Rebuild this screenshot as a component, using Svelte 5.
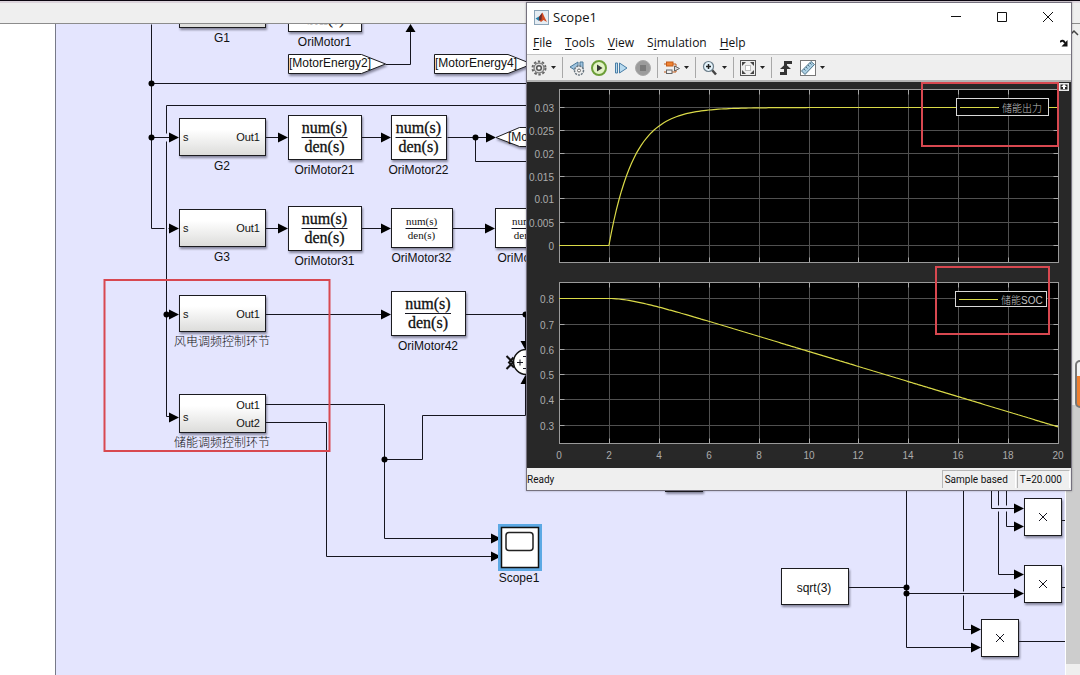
<script lang="ts">
// Model canvas with the Scope1 window floating over it. The canvas is drawn in
// desktop coordinates; the svg is shifted by the gutter and toolbar sizes.
type Subsystem = { y: number; h: number; label: string; outs: string[]; portY: number };

const subsystems: Subsystem[] = [
  { y: -10, h: 37, label: "G1", outs: [], portY: 9 },
  { y: 118, h: 37, label: "G2", outs: ["Out1"], portY: 137 },
  { y: 209, h: 37, label: "G3", outs: ["Out1"], portY: 228 },
  { y: 295, h: 36, label: "风电调频控制环节", outs: ["Out1"], portY: 314 },
  { y: 394, h: 38, label: "储能调频控制环节", outs: ["Out1", "Out2"], portY: 417 },
];

const transfers = [
  { x: 288, y: -13, w: 73, h: 44, label: "OriMotor1", small: false },
  { x: 288, y: 115, w: 73, h: 44, label: "OriMotor21", small: false },
  { x: 391, y: 115, w: 55, h: 44, label: "OriMotor22", small: false },
  { x: 288, y: 206, w: 73, h: 44, label: "OriMotor31", small: false },
  { x: 391, y: 208, w: 61, h: 39, label: "OriMotor32", small: true },
  { x: 495, y: 208, w: 65, h: 39, label: "OriMotor33", small: true },
  { x: 391, y: 291, w: 74, h: 44, label: "OriMotor42", small: false },
];

const products = [
  { x: 1024, y: 498 },
  { x: 1024, y: 565 },
  { x: 981, y: 619 },
];

const wires = [
  "M151 24V228H164M168 228H172",
  "M151 83H530M151 137H172",
  "M530 105H166V133M166 141V416H172",
  "M385 64H410V30",
  "M265 137H282M361 137H385M447 137H488M475 137V161H530",
  "M265 228H282M361 228H385M452 228H489",
  "M265 314H385M465 314H525V343",
  "M265 404H384V538H494M384 459H422V415H525V382",
  "M265 422H326V556H494",
  "M848 587H906M906 488V647H975M906 593H1018",
  "M963 488V591M963 595V629H975",
  "M991 488V508H1018M1006 488V505M1006 511V526H1018",
  "M998 488V505M998 511V574H1018",
  "M1061 520H1070M1061 587H1070M1018 641H1070",
];

const arrows = [
  [179, 137], [179, 228], [179, 314], [179, 417],
  [288, 137], [391, 137], [496, 137],
  [288, 228], [391, 228], [495, 228], [391, 314],
  [501, 538], [501, 556],
  [981, 629], [981, 647], [1024, 508], [1024, 526], [1024, 574], [1024, 593],
];

const dots = [
  [151, 83], [151, 137], [166, 314], [475, 137], [525, 314], [384, 459],
  [906, 587], [906, 593],
];

// plot geometry, relative to the dark display area
const left = 32;
const plotW = 499;
const xs = Array.from({ length: 11 }, (_, i) => ({ v: i * 2, x: Math.round(left + (i * plotW) / 10) }));
const px = (t: number) => left + (t / 20) * plotW;

const plots = [
  {
    top: 7, h: 173,
    ticks: [["0.03", 25], ["0.025", 48], ["0.02", 71], ["0.015", 94], ["0.01", 116], ["0.005", 140], ["0", 163]] as [string, number][],
  },
  {
    top: 200, h: 161,
    ticks: [["0.8", 216], ["0.7", 242], ["0.6", 267], ["0.5", 292], ["0.4", 317], ["0.3", 343]] as [string, number][],
  },
];

function trace(f: (t: number) => number) {
  let d = "";
  for (let t = 0; t <= 20.001; t += 0.1) d += `${d ? "L" : "M"}${px(t).toFixed(1)} ${f(t).toFixed(1)}`;
  return d;
}
const power = trace((t) => (t < 2 ? 163.5 : 163.5 - 138 * (1 - Math.exp(2 - t))));
const soc = trace((t) => (t < 2 ? 216.5 : 216.5 + 7.55 * (t - 2 - (1 - Math.exp(2 - t)))));

const menus = [["", "F", "ile"], ["", "T", "ools"], ["", "V", "iew"], ["S", "i", "mulation"], ["", "H", "elp"]];
</script>

{#snippet caret()}
  <svg class="caret" width="5" height="3" viewBox="0 0 5 3" aria-hidden="true"><path d="M0 0h5L2.5 3z" fill="#222" /></svg>
{/snippet}

<main class="desktop">
  <div class="toolstrip"></div>
  <div class="workspace">
    <div class="gutter"></div>
    <div class="canvas">
      <svg width="100%" height="100%" role="img" aria-label="Model canvas">
        <defs>
          <linearGradient id="sub" x1="0" y1="0" x2="0" y2="1">
            <stop offset="0.3" stop-color="#fff" />
            <stop offset="1" stop-color="#dcdcda" />
          </linearGradient>
        </defs>
        <g transform="translate(-56 -24)">
          <g class="wires" transform="translate(0.5 0.5)">
            {#each wires as d}<path {d} />{/each}
          </g>
          {#each arrows as [x, y]}
            <path d="M{x} {y + 0.5}l-10 -5v10z" />
          {/each}
          <path d="M410.5 24l-5 8h10zM525.5 350l-5 -9h10zM525.5 375l-5 9h10z" />
          {#each dots as [x, y]}
            <circle cx={x + 0.5} cy={y + 0.5} r="3" />
          {/each}

          {#each subsystems as s}
            <g class="node">
              <rect x="179.5" y={s.y + 0.5} width="86" height={s.h} fill="url(#sub)" />
            </g>
            {#if s.outs.length}
              <text class="port" x="183" y={s.portY + 4}>s</text>
            {/if}
            {#each s.outs as out, i}
              <text class="port" x="260" y={(s.outs.length > 1 ? 409 : s.portY + 4) + i * 18} text-anchor="end">{out}</text>
            {/each}
            <text class="name" x="222" y={s.y + s.h + 15}>{s.label}</text>
          {/each}

          {#each transfers as t}
            {@const cx = t.x + t.w / 2}
            {@const cy = t.y + t.h / 2}
            {@const half = t.small ? 16 : 23}
            <g class="node"><rect x={t.x + 0.5} y={t.y + 0.5} width={t.w} height={t.h} /></g>
            {#if t.y > 0}
              <text class="frac" class:small={t.small} x={cx} y={cy - (t.small ? 3 : 4)}>num(s)</text>
            {/if}
            <path class="bar" d="M{cx - half} {Math.round(cy) + 0.5}h{half * 2}" />
            <text class="frac" class:small={t.small} x={cx} y={cy + (t.small ? 11 : 15)}>den(s)</text>
            <text class="name" x={cx} y={t.y + t.h + 15}>{t.label}</text>
          {/each}

          <g class="node">
            <path d="M288.5 54.5H361.5L385.5 64L361.5 73.5H288.5z" />
            <path d="M434.5 54.5H508L532 64L508 73.5H434.5z" />
            <path d="M496 137.5L519.5 127.5H560V146.5H519.5z" />
            <rect x="781.5" y="568.5" width="67" height="36" />
            <rect x="665.5" y="455.5" width="37" height="36" />
          </g>
          <text x="289" y="67">[MotorEnergy2]</text>
          <text x="435" y="67">[MotorEnergy4]</text>
          <text x="508" y="141">[Mo</text>
          <text class="mid" x="814" y="592">sqrt(3)</text>

          <circle cx="526" cy="362" r="12.5" fill="#fff" stroke="#111" stroke-width="1.5" />
          <path d="M506.5 356L513 362.5L506.5 369M513.5 357.5L509 362.5L514 367.5" fill="none" stroke="#111" stroke-width="2" />
          <path class="bar" d="M517 362.5h6M520 359.5v6M523 356.5h5M523 368.5h5" />

          {#each products as p}
            <g class="node"><rect x={p.x + 0.5} y={p.y + 0.5} width="37" height="37" /></g>
            <path class="bar" d="M{p.x + 15} {p.y + 15}l8 8m0 -8l-8 8" />
          {/each}

          <rect x="499.5" y="525.5" width="41" height="44" fill="#fff" stroke="#5ca9e4" stroke-width="3" />
          <rect x="501.5" y="527.5" width="37" height="40" fill="#fff" stroke="#111" stroke-width="1.5" />
          <rect x="506" y="532.5" width="27" height="18" rx="3" fill="#fff" stroke="#222" stroke-width="1.5" />
          <text class="mid" x="519" y="582">Scope1</text>

          <rect x="104.5" y="280" width="225" height="171" class="mark" />
        </g>
      </svg>
    </div>
    <div class="scrollbar">
      <svg width="14" height="16" viewBox="0 0 14 16" aria-hidden="true"><path d="M4 11l4 -4l4 4" fill="none" stroke="#444" stroke-width="1.5" /></svg>
      <div class="thumb"></div>
      <div class="scroll-end"></div>
    </div>
  </div>

  <div class="side-tab"></div>

  <section class="scope" aria-label="Scope1">
    <header class="titlebar">
      <svg width="15" height="15" viewBox="0 0 15 15" aria-hidden="true">
        <rect x="0.5" y="0.5" width="14" height="14" fill="#e6edf3" stroke="#8ba4b8" />
        <path d="M1.5 8.5L5 6.5L7 8L5 11z" fill="#287ea8" />
        <path d="M5 7L8.5 2.5L10 6L13 12L9.5 10L7 12L5 10z" fill="#d34b22" />
        <path d="M5 7L8 3L7.5 10L5 10.5z" fill="#642d31" />
      </svg>
      <h1>Scope1</h1>
      <div class="controls">
        <button aria-label="Minimize"><svg width="12" height="12" viewBox="0 0 12 12"><path d="M1 5.5h10" /></svg></button>
        <button aria-label="Maximize"><svg width="12" height="12" viewBox="0 0 12 12"><path d="M1.5 1.5h9v9h-9z" /></svg></button>
        <button aria-label="Close"><svg width="12" height="12" viewBox="0 0 12 12"><path d="M1 1l10 10M11 1l-10 10" /></svg></button>
      </div>
    </header>
    <nav class="menubar">
      {#each menus as [pre, key, rest]}
        <button>{pre}<u>{key}</u>{rest}</button>
      {/each}
      <svg class="dock" width="8" height="8" viewBox="0 0 8 8" aria-hidden="true"><path d="M0 3q3 -3 5 1" fill="none" stroke="#111" stroke-width="2" /><path d="M7.5 1v6.5h-6z" fill="#111" /></svg>
    </nav>
    <div class="toolbar">
      <button aria-label="Configuration properties">
        <svg width="16" height="16" viewBox="0 0 16 16">
          <circle cx="8" cy="8" r="6.5" fill="none" stroke="#666" stroke-width="2" stroke-dasharray="2.4 1.7" />
          <circle cx="8" cy="8" r="5" fill="#ddd" stroke="#666" /><circle cx="8" cy="8" r="2.3" fill="#f5f5f5" stroke="#555" stroke-width="1.5" />
        </svg>{@render caret()}
      </button>
      <i></i>
      <button aria-label="Step back">
        <svg width="16" height="16" viewBox="0 0 16 16">
          <path d="M1 7L9 2V12zM11 2h3v9h-3z" fill="#9fc4e0" stroke="#4b7898" />
          <circle cx="10" cy="10.5" r="4.5" fill="#eee" stroke="#68747e" stroke-width="1.5" stroke-dasharray="2 1" /><circle cx="10" cy="10.5" r="1.5" fill="#fff" stroke="#666" />
        </svg>
      </button>
      <button aria-label="Run">
        <svg width="16" height="16" viewBox="0 0 16 16"><circle cx="8" cy="8" r="7" fill="#e3f3c6" stroke="#6c9e38" stroke-width="2" /><path d="M6 4.5L11.5 8L6 11.5z" fill="#333" /></svg>
      </button>
      <button aria-label="Step forward">
        <svg width="16" height="16" viewBox="0 0 16 16"><path d="M2.5 3h2v10h-2zM6.5 3L14 8L6.5 13z" fill="#b8daef" stroke="#487da5" /></svg>
      </button>
      <button aria-label="Stop">
        <svg width="16" height="16" viewBox="0 0 16 16"><circle cx="8" cy="8" r="7.5" fill="#9b9b9b" stroke="#aaa" /><rect x="5" y="5" width="6" height="6" fill="#7a7a7a" /></svg>
      </button>
      <i></i>
      <button aria-label="Highlight block">
        <svg width="16" height="16" viewBox="0 0 16 16">
          <path d="M0 4h2M9 4h3v4M12 8v4h-4M0 12h2" fill="none" stroke="#c35b18" />
          <rect x="2.5" y="2" width="6.5" height="4" fill="#f08331" stroke="#c35b18" />
          <rect x="2.5" y="10" width="5.5" height="3.5" fill="#f1f1f1" stroke="#666" /><path d="M10.5 6l5 2.5l-5 2.5z" fill="#ddd" stroke="#666" />
        </svg>{@render caret()}
      </button>
      <i></i>
      <button aria-label="Zoom">
        <svg width="16" height="16" viewBox="0 0 16 16"><path d="M10 10l4 4.5" stroke="#444" stroke-width="2.5" /><circle cx="6.5" cy="6.5" r="5" fill="#e4f3fb" stroke="#6b7d89" stroke-width="1.2" /><path d="M4 6.5h5M6.5 4v5" stroke="#222" stroke-width="1.5" /></svg>{@render caret()}
      </button>
      <i></i>
      <button aria-label="Scale axes">
        <svg width="16" height="16" viewBox="0 0 16 16">
          <rect x="0.5" y="0.5" width="15" height="15" fill="#eee" stroke="#555" /><rect x="5.5" y="5.5" width="5" height="5" fill="#fff" stroke="#bbb" />
          <path d="M2 2h4l-4 4zM14 2v4l-4 -4zM2 14v-4l4 4zM14 14h-4l4 -4z" fill="#444" />
        </svg>{@render caret()}
      </button>
      <i></i>
      <button aria-label="Triggers">
        <svg width="16" height="16" viewBox="0 0 16 16"><path d="M2 13.5h5.5V2.5H14" fill="none" stroke="#333" stroke-width="3" /><path d="M2 9l5.5 -5L13 9z" fill="#333" /></svg>
      </button>
      <button class="measure" aria-label="Cursor measurements">
        <svg width="16" height="16" viewBox="0 0 16 16"><rect x="0.5" y="0.5" width="15" height="15" fill="#fff" stroke="#777" /><path d="M1.5 11L11 1.5l3.5 3L5 14.5z" fill="#acd0e4" stroke="#4d7287" /><path d="M4 9l1.5 1.5M6 7l1.5 1.5M8 5l1.5 1.5M10 3l1.5 1.5" stroke="#4d7287" /></svg>{@render caret()}
      </button>
    </div>

    <svg class="display" viewBox="0 0 544 386" role="img" aria-label="Scope display">
      {#each plots as p}
        <rect x={left} y={p.top} width={plotW} height={p.h} fill="#000" />
        <g transform="translate(0.5 0.5)">
          {#each xs as { x }}
            <path class="grid" d="M{x} {p.top}v{p.h}" />
            <path class="tick" d="M{x} {p.top}v5M{x} {p.top + p.h}v-5" />
          {/each}
          {#each p.ticks as [, y]}
            <path class="grid" d="M{left} {y}h{plotW}" />
            <path class="tick" d="M{left} {y}h5M{left + plotW} {y}h-5" />
          {/each}
          <rect x={left} y={p.top} width={plotW} height={p.h} fill="none" stroke="#9a9a9a" />
        </g>
        {#each p.ticks as [label, y]}
          <text class="axis" x="27" y={y + 5} text-anchor="end">{label}</text>
        {/each}
      {/each}
      {#each xs as { v, x }}
        <text class="axis" {x} y="377" text-anchor="middle">{v}</text>
      {/each}

      <path class="trace" d={power} />
      <path class="trace" d={soc} />

      <rect class="legend" x="429.5" y="16.5" width="92" height="17" />
      <path class="trace" d="M433 25.5h39" />
      <text class="key" x="475" y="30">储能出力</text>
      <rect class="legend" x="428.5" y="209.5" width="91" height="15" />
      <path class="trace" d="M432 217.5h39" />
      <text class="key" x="474" y="222">储能SOC</text>

      <path d="M532 1h10v8h-10z" fill="#e8e8e8" /><path d="M533.5 2.5h7v5h-7z" fill="#222" /><path d="M537 2l-3 3h2v2h2v-2h2z" fill="#fff" />
      <rect class="mark" x="395" y="1" width="136" height="63" />
      <rect class="mark" x="409" y="185" width="113" height="67" />
    </svg>

    <footer class="status">
      <span class="ready">Ready</span>
      <span class="cell">Sample based</span>
      <span class="cell">T=20.000</span>
    </footer>
  </section>
</main>

<style>
:global(body) {
  margin: 0;
  overflow: hidden;
}

.desktop {
  position: relative;
  display: flex;
  flex-direction: column;
  height: 100vh;
  overflow: hidden;
  background: #fff;
  font-family: "Liberation Sans", "Noto Sans CJK SC", sans-serif;
}
.toolstrip {
  flex: none;
  box-sizing: border-box;
  height: 24px;
  background: #efefef;
  border-top: 1px solid #0b0510;
  border-bottom: 1px solid #8c8c8c;
  box-shadow: inset 0 2px #dcd4dc;
}
.workspace {
  display: flex;
  flex: 1;
  min-height: 0;
}
.gutter {
  flex: none;
  width: 55px;
  border-right: 1px solid #777a88;
}
.canvas {
  flex: 1;
  min-width: 0;
  background: #e4e5fe;
  border-right: 1px solid #fff;
}
.canvas svg {
  display: block;
}
.canvas text {
  font-size: 12px;
  fill: #111;
}
.wires path,
.canvas .bar {
  fill: none;
  stroke: #15151f;
  stroke-width: 1;
}
.node {
  fill: #fff;
  stroke: #1b1b1f;
  filter: drop-shadow(1px 2px 1px rgba(40, 40, 60, 0.5));
}
.canvas .port {
  font-size: 11px;
}
.canvas .name,
.canvas .mid {
  text-anchor: middle;
}
.canvas .name {
  font-weight: 300;
}
.canvas .frac {
  font-family: "Liberation Serif", serif;
  font-size: 16px;
  text-anchor: middle;
  stroke: #111;
  stroke-width: 0.3;
}
.canvas .frac.small {
  font-size: 11px;
  stroke: none;
}
.mark {
  fill: none;
  stroke: #d84850;
  stroke-width: 2;
}

.scrollbar {
  display: flex;
  flex-direction: column;
  flex: none;
  width: 14px;
  background: #efefef;
}
.thumb {
  flex: 1;
  margin-top: 365px;
  background: #cdcdcd;
}
.scroll-end {
  height: 11px;
}
.side-tab {
  position: absolute;
  top: 360px;
  right: -9px;
  width: 10px;
  height: 44px;
  border: 2px solid #777;
  border-radius: 5px;
  background: linear-gradient(#f4f4f4 14px, #ee7f31 14px);
}

.scope {
  position: absolute;
  top: 2px;
  left: 526px;
  display: flex;
  flex-direction: column;
  width: 544px;
  border: 1px solid #75717e;
  background: #fff;
  box-shadow: 0 0 2px rgba(0, 0, 0, 0.3);
}
.scope button {
  display: flex;
  align-items: center;
  padding: 0;
  border: 0;
  background: none;
  color: #111;
  font: inherit;
}
.titlebar {
  display: flex;
  align-items: center;
  gap: 4px;
  height: 28px;
  padding: 0 17px 0 7px;
  font-family: "Open Sans", sans-serif;
}
h1 {
  margin: 0;
  font-size: 13px;
  font-weight: 400;
  color: #111;
}
.controls {
  display: flex;
  gap: 34px;
  margin-left: auto;
}
.controls path {
  fill: none;
  stroke: #111;
}
.menubar {
  display: flex;
  align-items: center;
  gap: 13px;
  height: 23px;
  padding: 0 3px 0 6px;
  font-family: "Open Sans", sans-serif;
  font-size: 12px;
}
.menubar u {
  text-underline-offset: 2px;
}
.menubar .dock {
  margin-left: auto;
}
.toolbar {
  display: flex;
  align-items: center;
  gap: 6px;
  height: 25px;
  padding: 0 4px;
  border-top: 1px solid #c4c4c4;
  border-bottom: 2px solid #b4b4b4;
  background: #efefef;
}
.toolbar i {
  width: 1px;
  height: 21px;
  background: #a8a8a8;
}
.caret {
  margin-left: 4px;
}
.display {
  display: block;
  width: 100%;
  background: #282828;
}
.grid {
  stroke: #505050;
}
.tick {
  stroke: #a8a8a8;
}
.axis {
  font-size: 10px;
  fill: #acacac;
}
.trace {
  fill: none;
  stroke: #dada48;
  stroke-width: 1.2;
}
.legend {
  fill: #000;
  stroke: #d8d8d8;
}
.key {
  font-size: 10px;
  font-weight: 300;
  fill: #c0c0c0;
}

.status {
  display: flex;
  align-items: center;
  gap: 1px;
  height: 22px;
  padding-right: 1px;
  background: #efefef;
  color: #111;
  font-family: Roboto, sans-serif;
  font-size: 10px;
}
.ready {
  margin-right: auto;
}
.cell {
  padding: 3px 7px 3px 2px;
  border-top: 1px solid #b8b8b8;
  border-left: 1px solid #b8b8b8;
  border-right: 1px solid #fff;
}
</style>
